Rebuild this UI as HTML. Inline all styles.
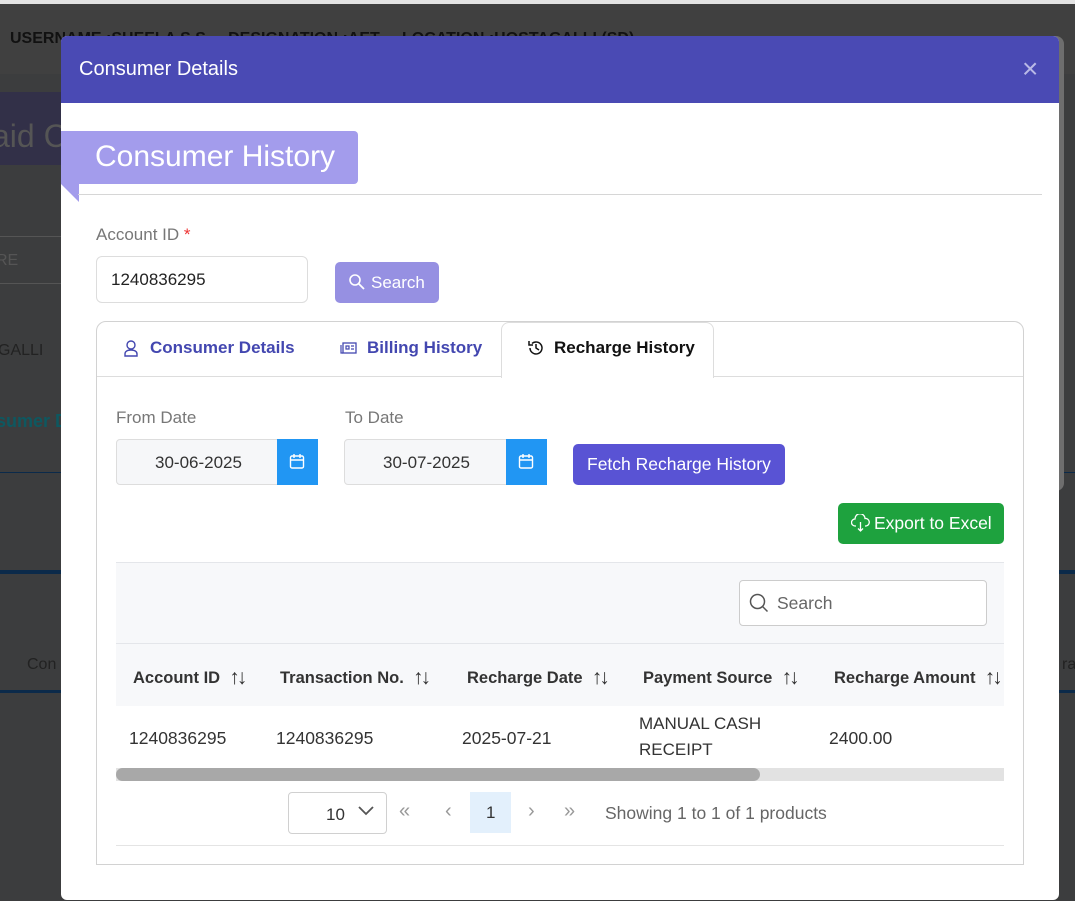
<!DOCTYPE html>
<html><head><meta charset="utf-8"><style>
*{box-sizing:border-box;margin:0;padding:0}
body{width:1075px;height:901px;overflow:hidden;background:#404040;font-family:"Liberation Sans",sans-serif;position:relative}
.a{position:absolute}
.t{white-space:nowrap}
.s{font-weight:normal;font-size:21px;letter-spacing:-3px;position:relative;top:1px}
</style></head><body>
<div class="a" style="left:0;top:0;width:1075px;height:4px;background:#e4e4e4"></div>
<div class="a t" style="left:10px;top:30px;font-size:16px;font-weight:bold;color:#111">USERNAME :SHEELA S.S &nbsp;&nbsp;&nbsp; DESIGNATION :AET &nbsp;&nbsp;&nbsp; LOCATION :HOSTAGALLI (SD)</div>
<div class="a" style="left:0;top:74px;width:1075px;height:827px;background:#3c3d3e"></div>
<div class="a" style="left:0;top:92px;width:70px;height:73px;background:#323048"></div>
<div class="a t" style="left:-8px;top:118px;font-size:32px;color:#555">aid C</div>
<div class="a" style="left:0;top:236px;width:70px;height:1px;background:#555"></div>
<div class="a t" style="left:-4px;top:252px;font-size:16px;color:#555">RE</div>
<div class="a" style="left:0;top:283px;width:70px;height:1px;background:#555"></div>
<div class="a t" style="left:-2px;top:342px;font-size:16px;color:#222">GALLI</div>
<div class="a t" style="left:-4px;top:411px;font-size:18px;font-weight:bold;color:#0e5860">sumer D</div>
<div class="a" style="left:0;top:472px;width:1075px;height:1px;background:#0b2a4a"></div>
<div class="a" style="left:0;top:570px;width:1075px;height:4px;background:#0b2a4a"></div>
<div class="a t" style="left:27px;top:656px;font-size:16px;color:#222">Con</div>
<div class="a t" style="left:1062px;top:656px;font-size:16px;color:#222">ra</div>
<div class="a" style="left:0;top:690px;width:1075px;height:3px;background:#0b2a4a"></div>
<div class="a" style="left:1040px;top:36px;width:24px;height:455px;background:#6e6e6e;border-radius:0 8px 8px 0"></div>
<div class="a" style="left:61px;top:36px;width:998px;height:864px;background:#fff;border-radius:6px;overflow:hidden">
 <div class="a" style="left:0;top:0;width:998px;height:67px;background:#4a4ab4"></div>
 <div class="a t" style="left:18px;top:22px;font-size:20px;color:#fff">Consumer Details</div>
 <div class="a t" style="left:961px;top:17px;font-size:28px;color:#b9b9e6">×</div>
 <div class="a" style="left:0;top:95px;width:297px;height:53px;background:#a39cec;border-radius:0 4px 4px 0"></div>
 <div class="a" style="left:0;top:148px;width:0;height:0;border-top:18px solid #a39cec;border-left:18px solid transparent"></div>
 <div class="a t" style="left:34px;top:104px;font-size:30px;color:#fff">Consumer History</div>
 <div class="a" style="left:17px;top:158px;width:964px;height:1px;background:#d6d6d6"></div>
 <div class="a t" style="left:35px;top:189px;font-size:17px;color:#777">Account ID <span style="color:#e33">*</span></div>
 <div class="a" style="left:35px;top:220px;width:212px;height:47px;border:1px solid #ddd;border-radius:6px"></div>
 <div class="a t" style="left:50px;top:234px;font-size:17px;color:#222">1240836295</div>
 <div class="a" style="left:274px;top:226px;width:104px;height:41px;background:#9690e2;border-radius:5px"></div>
 <svg class="a" style="left:287px;top:237px" width="18" height="18" viewBox="0 0 18 18"><circle cx="7" cy="7" r="5" fill="none" stroke="#fff" stroke-width="1.6"/><path d="M11 11l5 5" stroke="#fff" stroke-width="1.8"/></svg>
 <div class="a t" style="left:310px;top:237px;font-size:17px;color:#fff">Search</div>
 <div class="a" style="left:35px;top:285px;width:928px;height:544px;border:1px solid #d2d2d2;border-radius:10px 10px 0 0"></div>
 <div class="a" style="left:36px;top:340px;width:926px;height:1px;background:#ddd"></div>
 <div class="a" style="left:440px;top:286px;width:213px;height:56px;background:#fff;border:1px solid #ddd;border-bottom:none;border-radius:8px 8px 0 0"></div>
 <svg class="a" style="left:62px;top:303px" width="16" height="18" viewBox="0 0 16 18"><circle cx="8" cy="6" r="4" fill="none" stroke="#4347b0" stroke-width="1.4"/><path d="M2 17v-2c0-3 3-4 6-4s6 1 6 4v2z" fill="none" stroke="#4347b0" stroke-width="1.4"/></svg>
 <div class="a t" style="left:89px;top:302px;font-size:17px;font-weight:bold;color:#4347b0">Consumer Details</div>
 <svg class="a" style="left:279px;top:305px" width="17" height="14" viewBox="0 0 17 14"><rect x="3" y="2" width="13" height="10" fill="none" stroke="#4347b0" stroke-width="1.3"/><path d="M1 4v8h2M6 5h3v3H6zM11 5h3M11 8h3" stroke="#4347b0" stroke-width="1.2" fill="none"/></svg>
 <div class="a t" style="left:306px;top:302px;font-size:17px;font-weight:bold;color:#4347b0">Billing History</div>
 <svg class="a" style="left:466px;top:303px" width="18" height="18" viewBox="0 0 18 18"><path d="M3 9a6 6 0 1 0 2-4.5" fill="none" stroke="#111" stroke-width="1.5"/><path d="M2 2v4h4" fill="none" stroke="#111" stroke-width="1.5"/><path d="M9 5v4l3 2" fill="none" stroke="#111" stroke-width="1.5"/></svg>
 <div class="a t" style="left:493px;top:302px;font-size:17px;font-weight:bold;color:#111">Recharge History</div>
 <div class="a t" style="left:55px;top:372px;font-size:17px;color:#777">From Date</div>
 <div class="a" style="left:55px;top:403px;width:202px;height:46px;background:#f6f7f9;border:1px solid #ddd;border-radius:4px"></div>
 <div class="a t" style="left:94px;top:417px;font-size:17px;color:#333">30-06-2025</div>
 <div class="a" style="left:216px;top:403px;width:41px;height:46px;background:#2196f3"></div>
 <svg class="a" style="left:228px;top:417px" width="16" height="17" viewBox="0 0 16 17"><rect x="1.5" y="3" width="13" height="12" rx="1.5" fill="none" stroke="#fff" stroke-width="1.4"/><path d="M1.5 7h13M5 1v4M11 1v4" stroke="#fff" stroke-width="1.4"/></svg>
 <div class="a t" style="left:284px;top:372px;font-size:17px;color:#777">To Date</div>
 <div class="a" style="left:283px;top:403px;width:203px;height:46px;background:#f6f7f9;border:1px solid #ddd;border-radius:4px"></div>
 <div class="a t" style="left:322px;top:417px;font-size:17px;color:#333">30-07-2025</div>
 <div class="a" style="left:445px;top:403px;width:41px;height:46px;background:#2196f3"></div>
 <svg class="a" style="left:457px;top:417px" width="16" height="17" viewBox="0 0 16 17"><rect x="1.5" y="3" width="13" height="12" rx="1.5" fill="none" stroke="#fff" stroke-width="1.4"/><path d="M1.5 7h13M5 1v4M11 1v4" stroke="#fff" stroke-width="1.4"/></svg>
 <div class="a" style="left:512px;top:408px;width:212px;height:41px;background:#5953d4;border-radius:5px"></div>
 <div class="a t" style="left:526px;top:418px;font-size:17.5px;color:#fff">Fetch Recharge History</div>
 <div class="a" style="left:777px;top:467px;width:166px;height:41px;background:#1ea23e;border-radius:5px"></div>
 <svg class="a" style="left:790px;top:478px" width="19" height="18" viewBox="0 0 19 18"><path d="M5 12H4a3.5 3.5 0 0 1 0-7 5 5 0 0 1 10-0.5 3.5 3.5 0 0 1 1 7.5h-1" fill="none" stroke="#fff" stroke-width="1.3"/><path d="M9.5 8v9M7 14.5l2.5 2.5 2.5-2.5" fill="none" stroke="#fff" stroke-width="1.3"/></svg>
 <div class="a t" style="left:813px;top:477px;font-size:17.5px;color:#fff">Export to Excel</div>
 <div class="a" style="left:55px;top:526px;width:888px;height:144px;background:#f7f8fa;border-top:1px solid #e4e6ea"></div>
 <div class="a" style="left:55px;top:607px;width:888px;height:1px;background:#e4e6ea"></div>
 <div class="a" style="left:678px;top:544px;width:248px;height:46px;background:#fff;border:1px solid #ccc;border-radius:4px"></div>
 <svg class="a" style="left:687px;top:556px" width="22" height="22" viewBox="0 0 22 22"><circle cx="9.5" cy="9.5" r="7" fill="none" stroke="#555" stroke-width="1.5"/><path d="M14.5 14.5l5 5" stroke="#555" stroke-width="1.5"/></svg>
 <div class="a t" style="left:716px;top:557px;font-size:17.5px;color:#666">Search</div>
 <div class="a t" style="left:72px;top:629px;font-size:16.5px;font-weight:bold;color:#333">Account ID&nbsp; <span class="s">↑↓</span></div>
 <div class="a t" style="left:219px;top:629px;font-size:16.5px;font-weight:bold;color:#333">Transaction No.&nbsp; <span class="s">↑↓</span></div>
 <div class="a t" style="left:406px;top:629px;font-size:16.5px;font-weight:bold;color:#333">Recharge Date&nbsp; <span class="s">↑↓</span></div>
 <div class="a t" style="left:582px;top:629px;font-size:16.5px;font-weight:bold;color:#333">Payment Source&nbsp; <span class="s">↑↓</span></div>
 <div class="a t" style="left:773px;top:629px;font-size:16.5px;font-weight:bold;color:#333">Recharge Amount&nbsp; <span class="s">↑↓</span></div>
 <div class="a t" style="left:68px;top:692px;font-size:17.5px;color:#333">1240836295</div>
 <div class="a t" style="left:215px;top:692px;font-size:17.5px;color:#333">1240836295</div>
 <div class="a t" style="left:401px;top:692px;font-size:17.5px;color:#333">2025-07-21</div>
 <div class="a" style="left:578px;top:675px;font-size:17px;color:#333;line-height:26px">MANUAL CASH<br>RECEIPT</div>
 <div class="a t" style="left:768px;top:692px;font-size:17.5px;color:#333">2400.00</div>
 <div class="a" style="left:55px;top:732px;width:888px;height:13px;background:#e2e2e2"></div>
 <div class="a" style="left:55px;top:732px;width:644px;height:13px;background:#a8a8a8;border-radius:7px"></div>
 <div class="a" style="left:227px;top:756px;width:99px;height:42px;border:1px solid #d0d0d0;border-radius:4px"></div>
 <div class="a t" style="left:265px;top:769px;font-size:17px;color:#333">10</div>
 <svg class="a" style="left:297px;top:770px" width="16" height="10" viewBox="0 0 16 10"><path d="M1 1l7 7 7-7" fill="none" stroke="#555" stroke-width="1.8"/></svg>
 <div class="a t" style="left:338px;top:764px;font-size:20px;color:#999">«</div>
 <div class="a t" style="left:384px;top:764px;font-size:20px;color:#999">‹</div>
 <div class="a" style="left:409px;top:756px;width:41px;height:41px;background:#e3f0fc"></div>
 <div class="a t" style="left:425px;top:767px;font-size:17px;color:#333">1</div>
 <div class="a t" style="left:467px;top:764px;font-size:20px;color:#999">›</div>
 <div class="a t" style="left:503px;top:764px;font-size:20px;color:#999">»</div>
 <div class="a t" style="left:544px;top:767px;font-size:17.5px;color:#666">Showing 1 to 1 of 1 products</div>
 <div class="a" style="left:55px;top:809px;width:888px;height:1px;background:#e4e4e4"></div>
</div>
</body></html>
